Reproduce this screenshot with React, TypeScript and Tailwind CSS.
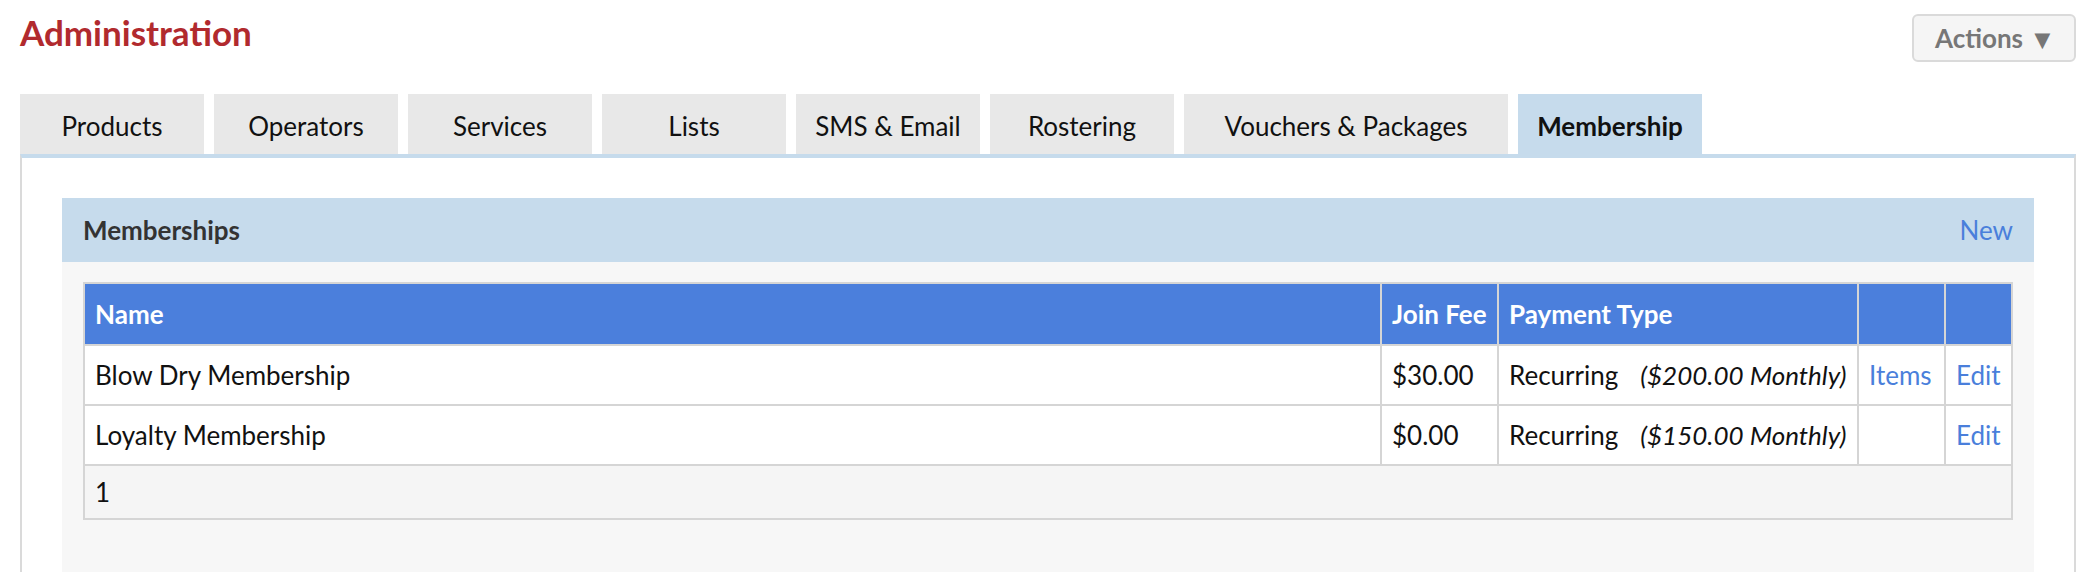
import React from "react";

const tabs = [
  { label: "Products", w: "w-[184px]" },
  { label: "Operators", w: "w-[184px]" },
  { label: "Services", w: "w-[184px]" },
  { label: "Lists", w: "w-[184px]" },
  { label: "SMS & Email", w: "w-[184px]" },
  { label: "Rostering", w: "w-[184px]" },
  { label: "Vouchers & Packages", w: "w-[324px]" },
  { label: "Membership", w: "w-[184px]", active: true },
];

const rows = [
  { name: "Blow Dry Membership", fee: "$30.00", amount: "($200.00 Monthly)", items: true },
  { name: "Loyalty Membership", fee: "$0.00", amount: "($150.00 Monthly)", items: false },
];

export default function App() {
  return (
    <div className="min-h-screen bg-white px-[20px] font-['Lato','Liberation_Sans',sans-serif] text-[26px] text-[#111]">
      {/* page header */}
      <div className="flex items-start justify-between pt-[14px]">
        <h1 className="mt-[1px] text-[35px] font-bold leading-none text-[#b12a2e]">
          Administration
        </h1>
        <button className="flex h-[48px] w-[164px] items-center rounded-[6px] border-2 border-[#dadada] bg-[#f5f5f5] pl-[21px] font-bold text-[#777]">
          Actions <span className="ml-[6px] text-[27px] leading-none">▼</span>
        </button>
      </div>

      {/* tabs */}
      <div className="mt-[32px] flex gap-[10px]">
        {tabs.map((t) => (
          <div
            key={t.label}
            className={`flex h-[60px] items-center justify-center pt-[4px] ${t.w} ${
              t.active ? "bg-[#c6dbec] font-bold" : "bg-[#e8e8e8]"
            }`}
          >
            {t.label}
          </div>
        ))}
      </div>

      {/* panel */}
      <div className="border-x-2 border-t-4 border-x-[#dadada] border-t-[#c6dbec] px-[40px] pt-[40px] pb-[40px]">
        <div className="flex h-[64px] items-center justify-between bg-[#c6dbec] px-[21px]">
          <span className="font-bold text-[#333]">Memberships</span>
          <a className="text-[#4a7fdb]">New</a>
        </div>
        <div className="bg-[#f7f7f7] px-[21px] pt-[20px] pb-[80px]">
          <table className="w-full table-fixed border-collapse">
            <colgroup>
              <col />
              <col className="w-[117px]" />
              <col className="w-[360px]" />
              <col className="w-[87px]" />
              <col className="w-[67px]" />
            </colgroup>
            <thead>
              <tr className="bg-[#4b7fdc] text-left font-bold text-white">
                <th className="border-2 border-[#d5d5d5] px-[10px] py-0 leading-[60px]">Name</th>
                <th className="border-2 border-[#d5d5d5] px-[10px] py-0 leading-[60px] whitespace-nowrap">Join Fee</th>
                <th className="border-2 border-[#d5d5d5] px-[10px] py-0 leading-[60px]">Payment Type</th>
                <th className="border-2 border-[#d5d5d5] px-[10px] py-0 leading-[60px]"></th>
                <th className="border-2 border-[#d5d5d5] px-[10px] py-0 leading-[60px]"></th>
              </tr>
            </thead>
            <tbody>
              {rows.map((r) => (
                <tr key={r.name} className="bg-white">
                  <td className="border-2 border-[#d5d5d5] px-[10px] leading-[58px]">{r.name}</td>
                  <td className="border-2 border-[#d5d5d5] px-[10px] leading-[58px]">{r.fee}</td>
                  <td className="border-2 border-[#d5d5d5] px-[10px] leading-[58px] whitespace-nowrap">
                    Recurring<i className="ml-[22px]">{r.amount}</i>
                  </td>
                  <td className="border-2 border-[#d5d5d5] px-[10px] leading-[58px] text-[#4a7fdb]">
                    {r.items ? "Items" : ""}
                  </td>
                  <td className="border-2 border-[#d5d5d5] px-[10px] leading-[58px] text-[#4a7fdb]">Edit</td>
                </tr>
              ))}
              <tr className="bg-[#f5f5f5]">
                <td colSpan={5} className="border-2 border-[#d5d5d5] px-[10px] leading-[52px]">
                  1
                </td>
              </tr>
            </tbody>
          </table>
        </div>
      </div>
    </div>
  );
}
